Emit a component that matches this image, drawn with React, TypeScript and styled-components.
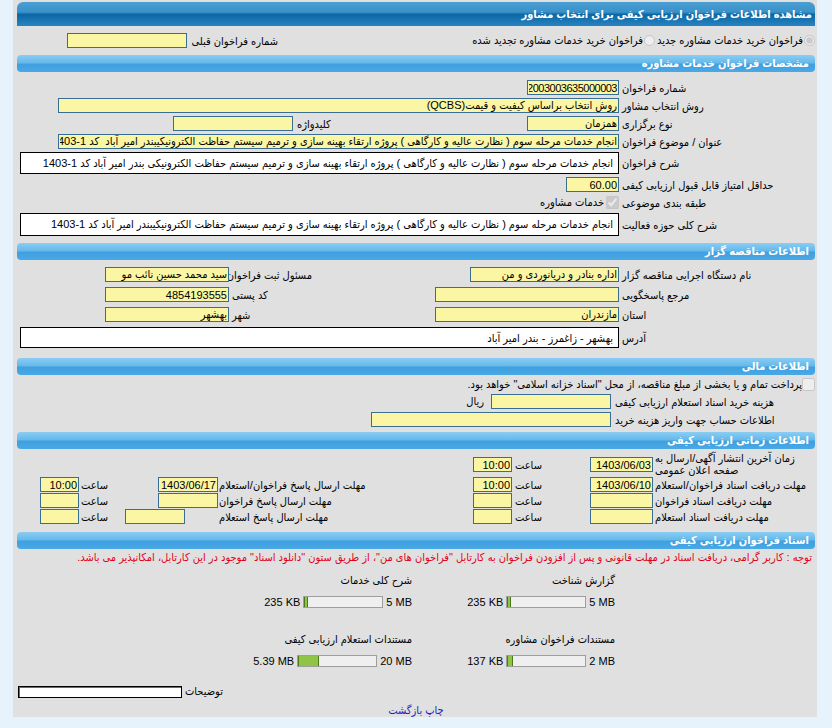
import React from "react";
import styled, { createGlobalStyle } from "styled-components";

const fontStack = `"Liberation Sans", "DejaVu Sans Condensed", "DejaVu Sans", sans-serif`;

const GlobalStyle = createGlobalStyle`
  html, body {
    margin: 0;
    padding: 0;
    background: #e6f2fc;
  }
  body {
    font-family: ${fontStack};
    font-size: 11px;
    color: #000;
  }
`;

const Page = styled.div`
  padding: 0 15px 0 13px;
`;

const Panel = styled.div`
  direction: rtl;
  width: 804px;
  box-sizing: border-box;
  background: #e0e0e0;
  padding: 2px 2px 0 4px;
`;

const TitleBar = styled.div`
  height: 24px;
  line-height: 24px;
  border-radius: 6px 6px 0 0;
  background: linear-gradient(
    to bottom,
    #4a9fd3 0%,
    #3a91c8 42%,
    #0c67a4 52%,
    #2783c1 100%
  );
  color: #fff;
  font-weight: bold;
  font-size: 11px;
  padding-right: 3px;
  white-space: nowrap;
`;

const SectionBar = styled.div`
  height: 17px;
  line-height: 17px;
  border-radius: 4px;
  background: linear-gradient(
    to bottom,
    #8acdf3 0%,
    #66b9ea 45%,
    #3f9fe0 55%,
    #4aa8e5 100%
  );
  color: #fff;
  font-weight: bold;
  font-size: 11px;
  padding-right: 6px;
  white-space: nowrap;
`;

const Body = styled.div<{ $pt: number; $pb: number; $gap: number }>`
  display: flex;
  flex-direction: column;
  padding: ${(p) => p.$pt}px 0 ${(p) => p.$pb}px;
  gap: ${(p) => p.$gap}px;
`;

const Row = styled.div<{ $cols: string; $h?: number }>`
  display: grid;
  grid-template-columns: ${(p) => p.$cols};
  align-items: center;
  min-height: ${(p) => p.$h ?? 15}px;
`;

const Label = styled.span<{ $pl?: number; $align?: "left" | "right" }>`
  text-align: ${(p) => p.$align ?? "left"};
  padding-left: ${(p) => p.$pl ?? 3}px;
  white-space: nowrap;
  line-height: 12px;
`;

const Field = styled.input<{ $w: number; $mr?: number; $tight?: boolean }>`
  justify-self: start;
  box-sizing: border-box;
  width: ${(p) => p.$w}px;
  height: 15px;
  margin: 0 ${(p) => p.$mr ?? 0}px 0 0;
  padding: 0 1px;
  border: 1px solid #3a6d92;
  background: #fbf6a4;
  font-family: ${fontStack};
  font-size: 11px;
  letter-spacing: ${(p) => (p.$tight ? "-0.5px" : "normal")};
  color: #000;
  direction: rtl;
  outline: none;
`;

const TextBox = styled.div<{ $h: number }>`
  box-sizing: border-box;
  height: ${(p) => p.$h}px;
  margin-left: 3px;
  padding: 4px 5px 0;
  background: #fff;
  border: 1px solid #000;
  white-space: nowrap;
  overflow: hidden;
  line-height: 12px;
`;

const Inline = styled.div`
  display: flex;
  align-items: center;
`;

const Check = styled.input`
  width: 13px;
  height: 13px;
  margin: 0 0 0 2px;
`;

const Radio = styled.input`
  width: 11px;
  height: 11px;
  margin: 0 0 0 1px;
`;

const Ltr = styled.span`
  direction: ltr;
  unicode-bidi: isolate;
`;

const Note = styled.div`
  color: #e3001b;
  padding-right: 3px;
  white-space: nowrap;
  line-height: 13px;
`;

const FilesGrid = styled.div`
  display: grid;
  grid-template-columns: 200px 203px 203px 1fr;
  row-gap: 25px;
  margin-top: 10px;
`;

const FileCell = styled.div`
  display: flex;
  flex-direction: column;
  align-items: flex-start;
  gap: 10px;
`;

const FileTitle = styled.div`
  line-height: 12px;
  white-space: nowrap;
`;

const SizeRow = styled.div`
  display: flex;
  align-items: center;
  gap: 3px;
  height: 12px;
  white-space: nowrap;
`;

const Meter = styled.div`
  width: 80px;
  height: 12px;
  box-sizing: border-box;
  border: 1px solid #9e9e9e;
  background: #efefef;
  direction: ltr;
  display: flex;
`;

const MeterFill = styled.div`
  height: 100%;
  box-sizing: border-box;
  background: #8fc445;
  border-left: 1px solid #4b7a1c;
  border-right: 1px solid #4b7a1c;
`;

const DescRow = styled.div`
  display: flex;
  justify-content: flex-end;
  align-items: center;
  gap: 3px;
  margin-top: 18px;
  padding-left: 1px;
`;

const DescBox = styled.div`
  width: 164px;
  height: 12px;
  box-sizing: border-box;
  background: #fff;
  border: 1px solid #000;
  box-shadow: inset 1px 1px 0 #6a6a6a;
`;

const Links = styled.div`
  text-align: center;
  line-height: 12px;
  padding: 6px 0 1px;
`;

const LinkA = styled.a`
  color: #1c1cc0;
  text-decoration: none;
`;

type FileInfo = { title: string; size: string; max: string; pct: number };

const files: FileInfo[] = [
  { title: "گزارش شناخت", size: "235 KB", max: "5 MB", pct: 4.6 },
  { title: "شرح کلی خدمات", size: "235 KB", max: "5 MB", pct: 4.6 },
  { title: "مستندات فراخوان مشاوره", size: "137 KB", max: "2 MB", pct: 6.7 },
  { title: "مستندات استعلام ارزیابی کیفی", size: "5.39 MB", max: "20 MB", pct: 27 },
];

const topic =
  "انجام خدمات مرحله سوم ( نظارت عالیه و کارگاهی ) پروژه ارتقاء بهینه سازی و ترمیم سیستم حفاظت الکترونیکیبندر امیر آباد  کد 1-1403";
const topicDesc =
  "انجام خدمات مرحله سوم ( نظارت عالیه و کارگاهی ) پروژه ارتقاء بهینه سازی و ترمیم سیستم حفاظت الکترونیکی بندر امیر آباد  کد 1-1403";

const FileBlock = ({ f }: { f: FileInfo }) => (
  <FileCell>
    <FileTitle>{f.title}</FileTitle>
    <SizeRow>
      <Ltr>{f.max}</Ltr>
      <Meter>
        <MeterFill style={{ width: `${f.pct}%` }} />
      </Meter>
      <Ltr>{f.size}</Ltr>
    </SizeRow>
  </FileCell>
);

const timeCols = "162px 63px 78px 39px 255px 61px 78px 39px 1fr";
const lastTimeCols = "162px 63px 78px 39px 255px 94px 45px 39px 1fr";

const App = () => {
  return (
    <Page>
      <GlobalStyle />
      <Panel>
        <TitleBar>مشاهده اطلاعات فراخوان ارزیابی کیفی برای انتخاب مشاور</TitleBar>
        <Body $pt={7} $pb={7} $gap={0}>
          <Row $cols="537px 90px 1fr">
            <Inline>
              <Radio type="radio" name="kind" checked disabled readOnly />
              <span>فراخوان خرید خدمات مشاوره جدید</span>
              <Radio type="radio" name="kind" disabled style={{ marginRight: 2 }} />
              <span>فراخوان خرید خدمات مشاوره تجدید شده</span>
            </Inline>
            <Label $align="right" $pl={0}>
              شماره فراخوان قبلی
            </Label>
            <Field $w={120} $mr={1} readOnly value="" />
          </Row>
        </Body>

        <SectionBar>مشخصات فراخوان خدمات مشاوره</SectionBar>
        <Body $pt={8} $pb={7} $gap={3}>
          <Row $cols="196px 1fr">
            <Label>شماره فراخوان</Label>
            <Field $w={92} $tight readOnly value="2003003635000003" />
          </Row>
          <Row $cols="196px 1fr">
            <Label>روش انتخاب مشاور</Label>
            <Field $w={561} readOnly value="روش انتخاب براساس کیفیت و قیمت(QCBS)" />
          </Row>
          <Row $cols="196px 1fr">
            <Label>نوع برگزاری</Label>
            <Inline>
              <Field $w={92} readOnly value="همزمان" />
              <Label $pl={4} style={{ width: 234, boxSizing: "border-box" }}>
                کلیدواژه
              </Label>
              <Field $w={120} readOnly value="" />
            </Inline>
          </Row>
          <Row $cols="196px 1fr">
            <Label>عنوان / موضوع فراخوان</Label>
            <Field $w={561} readOnly value={topic} />
          </Row>
          <Row $cols="196px 1fr">
            <Label>شرح فراخوان</Label>
            <TextBox $h={22}>{topicDesc}</TextBox>
          </Row>
          <Row $cols="196px 1fr">
            <Label>حداقل امتیاز قابل قبول ارزیابی کیفی</Label>
            <Field $w={53} readOnly value="60.00" />
          </Row>
          <Row $cols="196px 1fr">
            <Label>طبقه بندی موضوعی</Label>
            <Inline>
              <Check type="checkbox" checked disabled readOnly />
              <span>خدمات مشاوره</span>
            </Inline>
          </Row>
          <Row $cols="196px 1fr">
            <Label>شرح کلی حوزه فعالیت</Label>
            <TextBox $h={23}>{topic}</TextBox>
          </Row>
        </Body>

        <SectionBar>اطلاعات مناقصه گزار</SectionBar>
        <Body $pt={7} $pb={10} $gap={5}>
          <Row $cols="196px 307px 83px 1fr">
            <Label>نام دستگاه اجرایی مناقصه گزار</Label>
            <Field $w={149} readOnly value="اداره بنادر و دریانوردی و من" />
            <Label>مسئول ثبت فراخوان</Label>
            <Field $w={124} readOnly value="سید محمد حسین نائب مو" />
          </Row>
          <Row $cols="196px 307px 83px 1fr">
            <Label>مرجع پاسخگویی</Label>
            <Field $w={184} readOnly value="" />
            <Label>کد پستی</Label>
            <Field $w={124} readOnly value="4854193555" />
          </Row>
          <Row $cols="196px 307px 83px 1fr">
            <Label>استان</Label>
            <Field $w={184} readOnly value="مازندران" />
            <Label>شهر</Label>
            <Field $w={124} readOnly value="بهشهر" />
          </Row>
          <Row $cols="196px 1fr">
            <Label>آدرس</Label>
            <TextBox $h={21}>بهشهر - زاغمرز - بندر امیر آباد</TextBox>
          </Row>
        </Body>

        <SectionBar>اطلاعات مالی</SectionBar>
        <Body $pt={2} $pb={5} $gap={3}>
          <Row $cols="1fr" $h={14}>
            <Inline>
              <Check type="checkbox" disabled readOnly style={{ marginLeft: 0 }} />
              <span>
                پرداخت تمام و یا بخشی از مبلغ مناقصه، از محل "اسناد خزانه اسلامی" خواهد بود.
              </span>
            </Inline>
          </Row>
          <Row $cols="204px 1fr">
            <Label $pl={4}>هزینه خرید اسناد استعلام ارزیابی کیفی</Label>
            <Inline>
              <Field $w={120} readOnly value="" />
              <span style={{ marginRight: 7 }}>ریال</span>
            </Inline>
          </Row>
          <Row $cols="204px 1fr">
            <Label $pl={4}>اطلاعات حساب جهت واریز هزینه خرید</Label>
            <Field $w={240} readOnly value="" />
          </Row>
        </Body>

        <SectionBar>اطلاعات زمانی ارزیابی کیفی</SectionBar>
        <Body $pt={4} $pb={8} $gap={1}>
          <Row $cols={timeCols} $h={23}>
            <Label $pl={2} style={{ lineHeight: "11.5px" }}>
              زمان آخرین انتشار آگهی/ارسال به
              <br />
              صفحه اعلان عمومی
            </Label>
            <Field $w={63} readOnly value="1403/06/03" />
            <Label>ساعت</Label>
            <Field $w={39} readOnly value="10:00" />
          </Row>
          <Row $cols={timeCols}>
            <Label $pl={2}>مهلت دریافت اسناد فراخوان/استعلام</Label>
            <Field $w={63} readOnly value="1403/06/10" />
            <Label>ساعت</Label>
            <Field $w={39} readOnly value="10:00" />
            <Label $pl={1}>مهلت ارسال پاسخ فراخوان/استعلام</Label>
            <Field $w={60} readOnly value="1403/06/17" />
            <Label $pl={2}>ساعت</Label>
            <Field $w={39} readOnly value="10:00" />
          </Row>
          <Row $cols={timeCols}>
            <Label $pl={2}>مهلت دریافت اسناد فراخوان</Label>
            <Field $w={63} readOnly value="" />
            <Label>ساعت</Label>
            <Field $w={39} readOnly value="" />
            <Label $pl={1}>مهلت ارسال پاسخ فراخوان</Label>
            <Field $w={60} readOnly value="" />
            <Label $pl={2}>ساعت</Label>
            <Field $w={39} readOnly value="" />
          </Row>
          <Row $cols={lastTimeCols}>
            <Label $pl={2}>مهلت دریافت اسناد استعلام</Label>
            <Field $w={63} readOnly value="" />
            <Label>ساعت</Label>
            <Field $w={39} readOnly value="" />
            <Label $pl={1}>مهلت ارسال پاسخ استعلام</Label>
            <Field $w={60} $mr={33} readOnly value="" />
            <Label $pl={2}>ساعت</Label>
            <Field $w={39} readOnly value="" />
          </Row>
        </Body>

        <SectionBar>اسناد فراخوان ارزیابی کیفی</SectionBar>
        <Body $pt={2} $pb={0} $gap={0}>
          <Note>
            توجه : کاربر گرامی، دریافت اسناد در مهلت قانونی و پس از افزودن فراخوان به کارتابل
            "فراخوان های من"، از طریق ستون "دانلود اسناد" موجود در این کارتابل، امکانپذیر می
            باشد.
          </Note>
          <FilesGrid>
            <span />
            <FileBlock f={files[0]} />
            <FileBlock f={files[1]} />
            <span />
            <span />
            <FileBlock f={files[2]} />
            <FileBlock f={files[3]} />
            <span />
          </FilesGrid>
          <DescRow>
            <span>توضیحات</span>
            <DescBox />
          </DescRow>
          <Links>
            <LinkA href="#">چاپ</LinkA> <LinkA href="#">بازگشت</LinkA>
          </Links>
        </Body>
      </Panel>
    </Page>
  );
};

export default App;
